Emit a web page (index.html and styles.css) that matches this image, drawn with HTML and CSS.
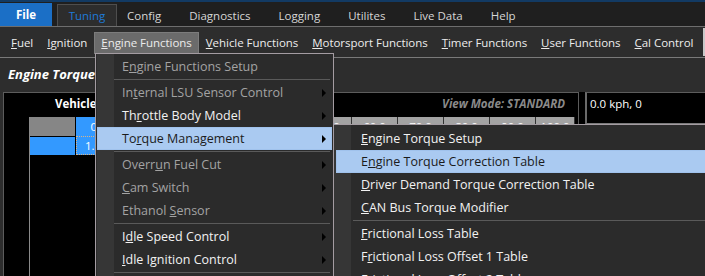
FILE: index.html
```html
<!DOCTYPE html>
<html>
<head>
<meta charset="utf-8">
<link rel="stylesheet" href="styles.css">
</head>
<body>
<div class="app">
  <header class="tabs">
    <div class="file-btn">File</div>
    <div class="tab-active">Tuning</div>
    <div class="tab first">Config</div>
    <div class="tab">Diagnostics</div>
    <div class="tab">Logging</div>
    <div class="tab">Utilites</div>
    <div class="tab">Live Data</div>
    <div class="tab">Help</div>
  </header>
  <nav class="menubar">
    <div class="mi"><u>F</u>uel</div>
    <div class="mi"><u>I</u>gnition</div>
    <div class="mi open"><u>E</u>ngine Functions</div>
    <div class="mi"><u>V</u>ehicle Functions</div>
    <div class="mi"><u>M</u>otorsport Functions</div>
    <div class="mi"><u>T</u>imer Functions</div>
    <div class="mi"><u>U</u>ser Functions</div>
    <div class="mi"><u>C</u>al Control</div>
    <div class="edge"></div>
  </nav>
  <section class="workspace">
    <div class="title">Engine Torque Correction Table</div>
    <div class="panels">
      <div class="grid-panel">
        <div class="grid-head">
          <span class="axis">Vehicle Speed (kph)</span>
          <span class="view-mode">View Mode: STANDARD</span>
        </div>
        <div class="table">
          <div class="row">
            <div class="c corner"></div>
            <div class="c hsel">0.0</div>
            <div class="c h">10.0</div>
            <div class="c h">20.0</div>
            <div class="c h">30.0</div>
            <div class="c h">40.0</div>
            <div class="c h">50.0</div>
            <div class="c h">60.0</div>
            <div class="c h">70.0</div>
            <div class="c h">80.0</div>
            <div class="c h">90.0</div>
            <div class="c h last">100.0</div>
          </div>
          <div class="row">
            <div class="c rsel"></div>
            <div class="c cell-sel">1.00</div>
          </div>
        </div>
      </div>
      <div class="splitter"></div>
      <div class="info-panel">0.0 kph, 0</div>
    </div>
  </section>

  <div class="popup">
    <div class="item dim">E<u>n</u>gine Functions Setup</div>
    <div class="sep"></div>
    <div class="item dim sub">In<u>t</u>ernal LSU Sensor Control</div>
    <div class="item sub">Th<u>r</u>ottle Body Model</div>
    <div class="item sub hot">To<u>r</u>que Management</div>
    <div class="sep"></div>
    <div class="item dim sub">Overr<u>u</u>n Fuel Cut</div>
    <div class="item dim sub"><u>C</u>am Switch</div>
    <div class="item dim sub">Ethanol <u>S</u>ensor</div>
    <div class="sep"></div>
    <div class="item sub">I<u>d</u>le Speed Control</div>
    <div class="item sub"><u>I</u>dle Ignition Control</div>
    <div class="sep"></div>
    <div class="item sub">Idle Control Setup</div>
  </div>

  <div class="popup submenu">
    <div class="item"><u>E</u>ngine Torque Setup</div>
    <div class="item hot">E<u>n</u>gine Torque Correction Table</div>
    <div class="item"><u>D</u>river Demand Torque Correction Table</div>
    <div class="item"><u>C</u>AN Bus Torque Modifier</div>
    <div class="sep"></div>
    <div class="item"><u>F</u>rictional Loss Table</div>
    <div class="item">F<u>r</u>ictional Loss Offset 1 Table</div>
    <div class="item">Fr<u>i</u>ctional Loss Offset 2 Table</div>
  </div>
</div>
</body>
</html>
```

FILE: styles.css
```css
* { box-sizing: border-box; }
html, body { margin: 0; padding: 0; }
body {
  width: 705px;
  height: 276px;
  overflow: hidden;
  background: #2d2d2d;
  font-family: "Open Sans", "Noto Sans", sans-serif;
  font-size: 11.5px;
  color: #e6e6e6;
}
.app { position: relative; width: 705px; height: 276px; overflow: hidden; }

/* top tabs */
.tabs {
  display: flex;
  align-items: flex-end;
  height: 26px;
  background: #1f1f1f;
  border-top: 2px solid #123a63;
}
.file-btn {
  width: 52px;
  height: 23px;
  background: #1b6fc6;
  color: #fff;
  font-weight: bold;
  text-align: center;
  line-height: 23px;
}
.tab-active {
  margin-left: 5px;
  width: 60px;
  height: 22px;
  background: #2d2d2d;
  border: 1px solid #4e4e4e;
  border-bottom: none;
  color: #1d7ad8;
  text-align: center;
  line-height: 22px;
}
.tab {
  padding: 0 14px;
  height: 22px;
  line-height: 23px;
  color: #d6d6d6;
}
.tab.first { margin-left: -4px; }

/* menubar */
.menubar {
  display: flex;
  height: 32px;
  padding: 5px 0 0 4px;
  background: #2d2d2d;
  border-top: 1px solid #6e6e6e;
  border-bottom: 1px solid #7a7a7a;
  position: relative;
}
.mi {
  height: 21px;
  line-height: 21px;
  padding: 0 7px;
  color: #ececec;
  white-space: nowrap;
  letter-spacing: -0.04px;
}
.mi.open {
  background: #6b6b6b;
  box-shadow: inset 0 0 0 1px #7c7c7c;
  height: 22px;
}
.edge {
  position: absolute;
  right: 0;
  top: 1px;
  width: 2px;
  height: 28px;
  background: #c9c9c9;
}

/* workspace */
.workspace { padding-left: 3px; }
.title {
  height: 34px;
  padding: 7px 0 0 5px;
  font-size: 13px;
  font-weight: bold;
  font-style: italic;
  color: #ffffff;
  white-space: nowrap;
}
.panels { display: flex; align-items: flex-start; }
.grid-panel {
  width: 576px;
  height: 200px;
  background: #000;
  border: 1px solid #5c5c5c;
}
.grid-head {
  display: flex;
  justify-content: space-between;
  height: 24px;
  padding: 1px 13px 0 51px;
  line-height: 20px;
}
.axis { font-weight: bold; color: #fff; }
.view-mode { font-weight: bold; font-style: italic; color: #8a8a8a; }
.table {
  margin-left: 25px;
  border-left: 1px solid #8a8a8a;
  height: 170px;
}
.row { display: flex; height: 19px; }
.c {
  width: 46px;
  height: 19px;
  line-height: 19px;
  text-align: center;
  color: #fff;
  flex: none;
}
.corner { width: 46px; background: #868686; border-right: 1px solid #000; }
.hsel { background: #3399ff; border-right: 1px solid #222; }
.h { background: #a3a3a3; border-right: 1px solid #333; }
.h.last { width: 39px; }
.rsel { background: #3399ff; border-right: 1px solid #000; border-top: 1px solid #000; }
.cell-sel {
  background: #3399ff;
  border: 1px dotted #d9b48a;
  text-align: left;
  padding-left: 8px;
  line-height: 17px;
}
.splitter { width: 6px; height: 32px; background: #000; }
.info-panel {
  flex: 1;
  height: 32px;
  background: #000;
  border-left: 2px solid #6a6a6a;
  border-top: 1px solid #5c5c5c;
  border-bottom: 1px solid #7a7a7a;
  padding: 3px 0 0 3px;
  color: #fff;
  white-space: nowrap;
}

/* popup menus */
.popup {
  position: absolute;
  left: 95px;
  top: 53px;
  width: 239px;
  height: 240px;
  padding: 1px;
  background: #2b2b2b linear-gradient(to right, #2b2b2b 0, #2b2b2b 1px, #363636 1px, #363636 18px, #2b2b2b 18px);
  border: 1px solid #a49ca2;
  font-size: 12.5px;
}
.item {
  position: relative;
  height: 23px;
  line-height: 24px;
  padding-left: 25px;
  color: #f2f2f2;
  white-space: nowrap;
}
.item.dim { color: #a3a3a3; }
.item.hot {
  background: #aacaf1;
  box-shadow: inset 0 0 0 1px #a0c2ec;
  color: #1b1b1b;
}
.item.sub::after {
  content: "";
  position: absolute;
  right: 6px;
  top: 8px;
  border-left: 4px solid #000;
  border-top: 4px solid transparent;
  border-bottom: 4px solid transparent;
}
.sep {
  margin: 1px 2px 0 17px;
  height: 2px;
  border-top: 1px solid #5a5a5a;
}
.submenu {
  left: 333px;
  top: 124px;
  width: 400px;
  padding: 2px 0 0 2px;
  background: #2b2b2b linear-gradient(to right, #363636 0, #363636 17px, #2b2b2b 17px);
}
.submenu .sep { margin-left: 17px; margin-right: 0; }
```
